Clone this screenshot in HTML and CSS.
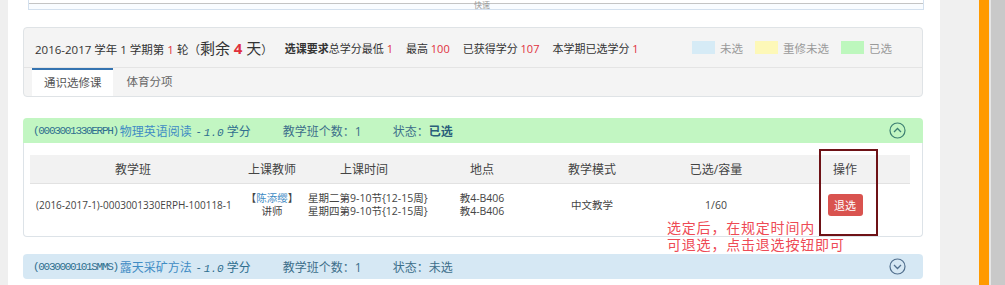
FILE: index.html
```html
<!DOCTYPE html>
<html lang="zh-CN">
<head>
  <meta charset="UTF-8" />
  <title>选课</title>
  <link rel="stylesheet" href="styles.css">
</head>
<body>
  <div class="page">
    <div class="gutter-left"></div>
    <div class="main">
      <div class="topbox"><span class="topbtn">快速</span></div>

      <div class="panel">
        <div class="panel-head">
          <span class="term">2016-2017 学年 1 学期第 <em class="red">1</em> 轮（<span class="remain">剩余 <b class="red">4</b> 天</span>）</span>
          <span class="req"><b>选课要求</b>总学分最低 <em class="red">1</em></span>
          <span class="req">最高 <em class="red">100</em></span>
          <span class="req">已获得学分 <em class="red">107</em></span>
          <span class="req">本学期已选学分 <em class="red">1</em></span>
          <div class="legend">
            <span class="legend-item"><i class="swatch blue"></i>未选</span>
            <span class="legend-item"><i class="swatch yellow"></i>重修未选</span>
            <span class="legend-item"><i class="swatch green"></i>已选</span>
          </div>
        </div>
        <div class="tabs">
          <a class="tab active">通识选修课</a>
          <a class="tab">体育分项</a>
        </div>
      </div>

      <div class="course">
        <div class="course-head selected">
          <span class="code">(0003001330ERPH)</span><a class="cname">物理英语阅读</a>
          <span class="credit">- <i>1.0</i> 学分</span>
          <span class="count">教学班个数：1</span>
          <span class="status">状态：<b>已选</b></span>
          <svg class="toggle up" width="17" height="17" viewBox="0 0 17 17"><circle cx="8.5" cy="8.5" r="7.5" fill="none" stroke="currentColor" stroke-width="1.2"/><path d="M5 10 L8.5 6.5 L12 10" fill="none" stroke="currentColor" stroke-width="1.3"/></svg>
        </div>
        <div class="course-body">
          <div class="grid head">
            <div>教学班</div>
            <div>上课教师</div>
            <div>上课时间</div>
            <div>地点</div>
            <div>教学模式</div>
            <div>已选/容量</div>
            <div>操作</div>
          </div>
          <div class="grid row">
            <div class="left cls">(2016-2017-1)-0003001330ERPH-100118-1</div>
            <div><span class="teacher">【<a>陈添缨</a>】</span><span>讲师</span></div>
            <div class="left"><span>星期二第9-10节{12-15周}</span><span>星期四第9-10节{12-15周}</span></div>
            <div><span>教4-B406</span><span>教4-B406</span></div>
            <div>中文教学</div>
            <div>1/60</div>
            <div><button class="btn-drop">退选</button></div>
          </div>
        </div>
        <div class="mark-box"></div>
        <div class="note">选定后，在规定时间内<br>可退选，点击退选按钮即可</div>
      </div>

      <div class="course">
        <div class="course-head open">
          <span class="code">(0030000101SMMS)</span><a class="cname">露天采矿方法</a>
          <span class="credit">- <i>1.0</i> 学分</span>
          <span class="count">教学班个数：1</span>
          <span class="status">状态：未选</span>
          <svg class="toggle down" width="17" height="17" viewBox="0 0 17 17"><circle cx="8.5" cy="8.5" r="7.5" fill="none" stroke="currentColor" stroke-width="1.2"/><path d="M5 7 L8.5 10.5 L12 7" fill="none" stroke="currentColor" stroke-width="1.3"/></svg>
        </div>
      </div>
    </div>
    <div class="gutter-right"></div>
    <div class="orange"></div>
    <div class="scroll"></div>
  </div>
</body>
</html>
```

FILE: styles.css
```css
* {
  box-sizing: border-box;
}
body {
  margin: 0;
  font-family: "Open Sans", "Noto Sans CJK SC", sans-serif;
  font-size: 12px;
  color: #333;
  background: #fff;
  white-space: nowrap;
}
em, i {
  font-style: normal;
}
.page {
  display: flex;
  height: 285px;
  overflow: hidden;
}
.gutter-left {
  width: 8px;
  background: #efefef;
}
.main {
  width: 932px;
  padding: 0 9px 0 15px;
}
.gutter-right {
  width: 39px;
  background: #f0f0f0;
}
.orange {
  width: 10px;
  background: #ff9a00;
}
.scroll {
  flex: 1;
  background: #c9c9c9;
  border-left: 2px solid #e6e6e6;
}
.topbox {
  height: 10px;
  margin: 0 0 0 5px;
  width: 896px;
  border: 1px solid #d3e0ee;
  border-top: none;
  background: #f9fcff;
  position: relative;
}
.topbox::before {
  content: "";
  display: block;
  height: 3px;
  border-bottom: 1px solid #c4c4c4;
  background: #fff;
}
.topbtn {
  position: absolute;
  left: 445px;
  top: 0;
  font-size: 8px;
  line-height: 9px;
  color: #999;
}
.panel {
  margin-top: 17px;
  width: 900px;
  border: 1px solid #dfe3e6;
  border-radius: 4px;
  background: #f4f4f4;
}
.panel-head {
  height: 40px;
  display: flex;
  align-items: center;
  padding: 0 0 0 11px;
  border-bottom: 1px solid #e4e4e4;
}
.term {
  font-size: 11.5px;
  margin-right: 12px;
}
.remain {
  font-size: 15px;
}
.remain b {
  font-weight: bold;
}
.red {
  color: #e0303c;
}
.req {
  font-size: 11px;
  margin-right: 13px;
}
.req b {
  font-weight: bold;
}
.legend {
  display: flex;
  margin-left: auto;
  margin-right: 30px;
  gap: 12px;
  color: #9a9a9a;
  font-size: 11.5px;
}
.legend-item {
  display: flex;
  align-items: center;
  gap: 5px;
}
.swatch {
  display: inline-block;
  width: 23px;
  height: 13px;
}
.swatch.blue { background: #d6ebf6; }
.swatch.yellow { background: #fdf8b8; }
.swatch.green { background: #bdf7bd; }
.tabs {
  height: 28px;
  display: flex;
  padding-left: 8px;
  font-size: 11.5px;
}
.tab {
  padding: 0 14px;
  line-height: 27px;
  color: #666;
}
.tab.active {
  background: #fff;
  border-top: 2px solid #3473b0;
  line-height: 26px;
  color: #555;
  padding: 0 11px 0 12px;
}
.course {
  width: 900px;
  margin-top: 21px;
  position: relative;
}
.course + .course {
  margin-top: 17px;
}
.course-head {
  height: 25px;
  display: flex;
  align-items: center;
  padding: 0 0 0 10px;
  border-radius: 4px 4px 0 0;
}
.course-head.selected {
  background: #c2f6c2;
}
.course-head.open {
  background: #d6e8f4;
  border-radius: 4px;
}
.code {
  font-family: "Liberation Mono", monospace;
  font-size: 11px;
  letter-spacing: -1.3px;
  color: #2f6f8f;
  margin-right: 2px;
}
.cname {
  color: #3f8cc4;
  margin-right: 5px;
}
.credit {
  color: #2f6f8f;
  margin-right: 32px;
}
.credit i {
  font-family: "Liberation Mono", monospace;
  font-style: italic;
  font-size: 11px;
}
.count {
  color: #3c6e8a;
  margin-right: 31px;
}
.status {
  color: #3c6e8a;
}
.status b {
  font-weight: bold;
  color: #2a5f7a;
}
.toggle {
  margin-left: auto;
  margin-right: 17px;
}
.toggle.up { color: #3d7f72; }
.toggle.down { color: #52708e; }
.course-body {
  border: 1px solid #dde3e8;
  border-top: none;
  border-radius: 0 0 4px 4px;
  padding: 12px 12px 10px 6px;
  background: #fff;
}
.grid {
  display: grid;
  grid-template-columns: 206px 72px 112px 124px 96px 152px 106px 1fr;
  text-align: center;
  align-items: center;
}
.grid.head {
  height: 29px;
  background: #f2f2f2;
  border-bottom: 1px solid #e2e2e2;
  color: #444;
}
.grid.row {
  height: 42px;
  font-size: 10.5px;
  color: #444;
}
.grid.row > div {
  display: flex;
  flex-direction: column;
  align-items: center;
  line-height: 13px;
}
.grid.row > .left {
  align-items: flex-start;
}
.grid.row > .cls {
  padding-left: 6px;
  font-size: 10px;
}
.teacher a {
  color: #3f8cc4;
}
.btn-drop {
  border: none;
  border-radius: 3px;
  background: #d9534f;
  color: #fff;
  font-family: inherit;
  font-size: 11px;
  width: 35px;
  height: 22px;
  padding: 0;
}
.mark-box {
  position: absolute;
  left: 796px;
  top: 31px;
  width: 59px;
  height: 87px;
  border: 2px solid #6e1216;
}
.note {
  position: absolute;
  left: 644px;
  top: 101px;
  font-size: 14px;
  line-height: 17px;
  letter-spacing: 0.8px;
  color: #ee4a55;
}
```
